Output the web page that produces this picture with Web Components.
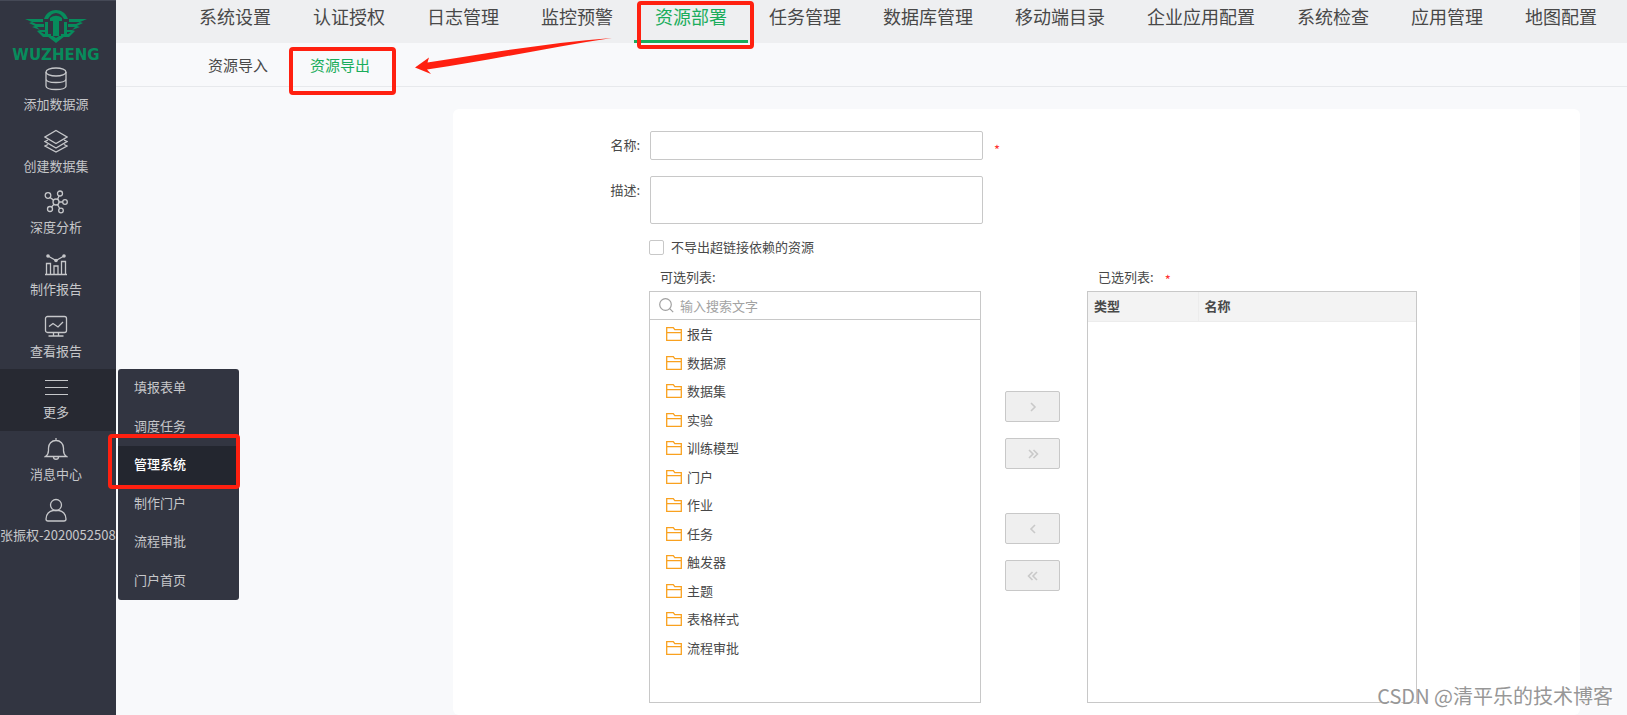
<!DOCTYPE html>
<html lang="zh-CN">
<head>
<meta charset="utf-8">
<title>资源导出</title>
<style>
  html { --red: #ff2010; --green: #1aad5c; --line: #c8c8c8; --dark: #323541; }
  body { margin: 0; background: #f8f9fb; color: #484848;
    font: 13px/20px "Noto Sans CJK SC", sans-serif; }
</style>
</head>
<body>
<app-shell>
  <side-nav slot="side">
    <side-item icon="db">添加数据源</side-item>
    <side-item icon="layers">创建数据集</side-item>
    <side-item icon="graph">深度分析</side-item>
    <side-item icon="bars">制作报告</side-item>
    <side-item icon="screen">查看报告</side-item>
    <side-item icon="more" active>更多
      <fly-menu slot="menu"></fly-menu>
    </side-item>
    <side-item icon="bell">消息中心</side-item>
    <side-item icon="user">张振权-2020052508</side-item>
  </side-nav>
  <tab-bar kind="main" current="资源部署"
    items="系统设置,认证授权,日志管理,监控预警,资源部署,任务管理,数据库管理,移动端目录,企业应用配置,系统检查,应用管理,地图配置"></tab-bar>
  <tab-bar kind="sub" current="资源导出" items="资源导入,资源导出"></tab-bar>
  <export-form></export-form>
</app-shell>

<script>
const define = (name, html) => customElements.define(name, class extends HTMLElement {
  connectedCallback() {
    if (this.shadowRoot) return;
    const root = this.attachShadow({ mode: 'open' });
    const t = document.createElement('template');
    t.innerHTML = '<style>*{box-sizing:border-box}</style>' + (typeof html === 'function' ? html(this) : html);
    root.append(t.content.cloneNode(true));
  }
});

const icons = {
  db: '<ellipse cx="12" cy="5" rx="10" ry="4"/><path d="M2 5v14c0 2.200 4.500 3.500 10 3.500s10-1.300 10-3.500V5M2 12c0 2.200 4.500 3.500 10 3.500s10-1.300 10-3.500"/>',
  layers: '<path d="M12 1.500 23 8l-11 6.500L1 8zM4 11l-3 1.500 11 6.500 11-6.500-3-1.500M4 15.500 1 17l11 6 11-6-3-1.500"/>',
  graph: '<circle cx="12" cy="12" r="3"/><circle cx="4" cy="5.500" r="2.800"/><circle cx="16" cy="3.500" r="2.500"/><circle cx="21" cy="12" r="2.300"/><circle cx="6" cy="19" r="2.500"/><circle cx="17" cy="20.500" r="2.300"/><path d="m6 7.500 3.700 2.600M15 6l-1.500 3.500M15 12h3.700M7.500 17l2.500-2.700M15.700 18.500 13.500 14.700"/>',
  bars: '<path d="M1 22.500h22M2.500 22V11.500h4V22M10 22v-8h4v8M17.500 22V9.500h4V22M4 4l8 4.500L20 4"/><g fill="currentColor" stroke="none"><circle cx="4" cy="4" r="1.800"/><circle cx="12" cy="8.500" r="1.800"/><circle cx="20" cy="4" r="1.800"/></g>',
  screen: '<rect x="1.500" y="2.500" width="21" height="16" rx="2"/><path d="m5 12.500 4-3 5 3.500 5-5M9.500 18.500v3M14.500 18.500v3M4.500 22h15"/>',
  more: '<path stroke-width="1" d="M1 5.500h23M1 12.500h23M1 19.500h23"/>',
  bell: '<path d="M1.500 19.500h21c-2-1.500-3-3-3-6V11c0-4-3-7.500-7.500-7.500S4.500 7 4.500 11v2.500c0 3-1 4.500-3 6zM12 3.500V1M9.500 20c0 3 5 3 5 0"/>',
  user: '<circle cx="12" cy="7" r="5.500"/><path d="M2 21c0-5 3.500-8 7-8.500h6c3.500.500 7 3.500 7 8.500 0 1.500-.800 2-2 2H4c-1.200 0-2-.500-2-2z"/>'
};

define('app-shell', `
  <style>
    :host { display: grid; grid-template-columns: 116px minmax(0, 1fr); min-height: 100vh; position: relative; overflow: hidden; }
    main { display: flex; flex-direction: column; }
    .arrow { position: absolute; left: 412px; top: 34px; fill: var(--red); pointer-events: none; }
    .mark { position: absolute; right: 14px; bottom: 4px; font-size: 20px; line-height: 30px; color: #979797;
      text-shadow: 1px 1px 0 #fff; }
  </style>
  <slot name="side"></slot>
  <main><slot></slot></main>
  <svg class="arrow" width="202" height="44" viewBox="0 0 202 44"><path d="M3 33.500 17 23.500 15.500 28.500C80 18.500 140 8.500 200 4 140 13 80 26 15 35.500L19 40z"/></svg>
  <div class="mark">CSDN @清平乐的技术博客</div>`);

define('side-nav', `
  <style>
    :host { display: block; background: var(--dark); border-top: 1px solid #454956; color: #c6c7ca; position: relative; z-index: 2; }
    .brand { display: flex; flex-direction: column; align-items: center; gap: 4px; height: 60px; padding: 8px 4px 0 0; color: #078c5c; }
    .brand span { font: bold 15px/16px "DejaVu Sans", sans-serif; }
    .brand svg { flex: none; }
    nav { display: flex; flex-direction: column; height: 493px; }
  </style>
  <div class="brand">
    <svg width="62" height="34" viewBox="0 0 62 34" fill="currentColor">
      <path d="M0 10h18v3H7l4 2h8v3H12l3 3h5v2h-4l3 2h7v3H18L12 22l3-1-8-3 3-1-6-3 3-1z"/>
      <path d="M62 10H44v3h11l-4 2h-8v3h7l-3 3h-5v2h4l-3 2h-7v3h8l6-6-3-1 8-3-3-1 6-3-3-1z"/>
      <path d="M19 10C21 4 26 1 31 1s10 3 12 9h-4c-2-4-5-6-8-6s-6 2-8 6z"/>
      <path d="M25 9c4-3 8-3 12 0v3h-3v15h-6V12h-3z"/>
      <path d="M20 13h3v12h-3zM39 13h3v12h-3zM22 27h6l3 2 3-2h6l-9 7z"/>
    </svg>
    <span>WUZHENG</span>
  </div>
  <nav><slot></slot></nav>`);

define('side-item', el => `
  <style>
    :host { display: block; flex: 1; position: relative; }
    :host([active]) { background: #272932; }
    a { display: flex; flex-direction: column; align-items: safe center; gap: 3px; height: 100%; padding: 6px 4px 0 0; white-space: nowrap;
      color: inherit; text-decoration: none; }
    svg { flex: none; fill: none; stroke: currentColor; stroke-width: 1.300; }
  </style>
  <a href="#"><svg width="24" height="24" viewBox="0 0 24 24">${icons[el.getAttribute('icon')]}</svg><span><slot></slot></span></a>
  <slot name="menu"></slot>`);

define('mark-box', `
  <style>:host { display: block; position: absolute; border: 4px solid var(--red); border-radius: 4px; pointer-events: none; box-sizing: border-box; }</style>`);

define('fly-menu', `
  <style>
    :host { display: flex; flex-direction: column; position: absolute; left: 118px; top: 0; width: 121px; height: 231px;
      background: var(--dark); border-radius: 3px; }
    a { flex: 1; display: flex; align-items: center; padding: 0 0 2px 16px; color: inherit; text-decoration: none; position: relative; }
    a.on { background: #23262f; color: #fff; font-weight: 500; }
    mark-box { inset: -12px -1px -4px -10px; }
  </style>
  <a href="#">填报表单</a><a href="#">调度任务</a>
  <a href="#" class="on">管理系统<mark-box></mark-box></a>
  <a href="#">制作门户</a><a href="#">流程审批</a><a href="#">门户首页</a>`);

define('tab-bar', el => `
  <style>
    :host { display: flex; box-sizing: border-box; padding-left: 62px; white-space: nowrap; }
    a { position: relative; padding: 0 21px; color: inherit; text-decoration: none; }
    a.on { color: var(--green); }
    :host([kind=main]) { height: 43px; background: #eeeff1; font-size: 18px; line-height: 32px; }
    :host([kind=main]) a.on { border-bottom: 3px solid var(--green); }
    :host([kind=main]) mark-box { inset: 1px -6px -9px 3px; }
    :host([kind=sub]) { height: 44px; padding-left: 71px; border-bottom: 1px solid #e7e9ec; font-size: 15px; line-height: 44px; }
    :host([kind=sub]) mark-box { inset: 4px -5px -9px 0; }
  </style>
  ${el.getAttribute('items').split(',').map(t => t === el.getAttribute('current')
    ? `<a href="#" class="on">${t}<mark-box></mark-box></a>` : `<a href="#">${t}</a>`).join('')}`);

define('folder-row', `
  <style>
    :host { display: flex; flex: 1; align-items: center; gap: 5px; padding-left: 16px; }
    svg { fill: none; stroke: #f9a11f; stroke-width: 1.300; }
  </style>
  <svg width="16" height="14" viewBox="0 0 16 14"><path d="M.700 13.300V.700h6.600l1.500 2h6.500v10.600zM.700 5.700h14.600"/></svg>
  <span><slot></slot></span>`);

const folders = ['报告','数据源','数据集','实验','训练模型','门户','作业','任务','触发器','主题','表格样式','流程审批'];
const chevron = (label, d) => `<button type="button" disabled aria-label="${label}"><svg width="12" height="10" viewBox="0 0 12 10"><path d="${d}"/></svg></button>`;

define('export-form', `
  <style>
    :host { display: block; flex: 1; margin: 22px 47px 0 337px; padding: 22px 0 11px; background: #fff; border-radius: 6px; }
    .row { display: flex; gap: 10px; margin-bottom: 16px; }
    .row > label { width: 187px; flex: none; text-align: right; line-height: 28px; }
    input, textarea { font: inherit; color: inherit; margin: 0; outline: 0; }
    .row input, textarea { width: 333px; border: 1px solid var(--line); border-radius: 2px; padding: 4px 6px; background: #fff; }
    .row input { height: 29px; }
    textarea { height: 48px; resize: none; display: block; }
    .row i, .right i { color: #f33; font-style: normal; }
    .row i { padding-top: 9px; line-height: 20px; margin-left: 1px; }
    .check { display: flex; align-items: center; gap: 7px; margin: -3px 0 10px 196px; }
    .check input { appearance: none; width: 15px; height: 15px; border: 1px solid var(--line); border-radius: 2px; }
    .lists { display: flex; margin-left: 196px; }
    .left { width: 332px; }
    .right { width: 330px; }
    .cap { height: 20px; margin-bottom: 4px; padding-left: 11px; display: flex; gap: 11px; }
    .cap i { padding-top: 3px; }
    .box { border: 1px solid var(--line); height: 412px; }
    .search { display: flex; align-items: center; gap: 6px; height: 28px; padding-left: 9px; border-bottom: 1px solid var(--line); }
    .search svg { fill: none; stroke: #a0a0a0; stroke-width: 1.200; }
    .search input { border: 0; padding: 0; flex: 1; min-width: 0; background: none; }
    .search input::placeholder { color: #a3a3a3; opacity: 1; }
    .tree { display: flex; flex-direction: column; height: 342px; }
    .moves { display: flex; flex-direction: column; gap: 16px; width: 55px; margin: 124px 27px 0 24px; }
    button { height: 31px; padding: 0; display: flex; align-items: center; justify-content: center; border: 1px solid var(--line); border-radius: 2px; background: #efefef; }
    button:nth-child(3) { margin-top: 28px; }
    button svg { fill: none; stroke: #c9c9c9; stroke-width: 1.600; }
    table { width: 100%; border-collapse: collapse; table-layout: fixed; }
    th { height: 29px; padding: 0 0 0 6px; text-align: left; font-weight: 700; background: #f3f3f3; border-bottom: 1px solid #ececec; }
    th:first-child { width: 110px; border-right: 1px solid #ececec; }
  </style>
  <div class="row"><label for="name">名称:</label><input id="name" type="text"><i>*</i></div>
  <div class="row"><label for="desc">描述:</label><textarea id="desc"></textarea></div>
  <div class="check"><input type="checkbox" id="skip"><label for="skip">不导出超链接依赖的资源</label></div>
  <div class="lists">
    <section class="left">
      <div class="cap"><label for="find">可选列表:</label></div>
      <div class="box">
        <div class="search"><svg width="15" height="15" viewBox="0 0 15 15"><circle cx="6.500" cy="6.500" r="5.800"/><path d="m10.700 10.700 3.500 3.500"/></svg>
          <input id="find" type="text" placeholder="输入搜索文字"></div>
        <div class="tree">${folders.map(f => `<folder-row>${f}</folder-row>`).join('')}</div>
      </div>
    </section>
    <div class="moves">
      ${chevron('添加', 'm4 1 4 4-4 4')}${chevron('全部添加', 'm2 1 4 4-4 4M6.500 1l4 4-4 4')}
      ${chevron('移除', 'M8 1 4 5l4 4')}${chevron('全部移除', 'm5.500 1-4 4 4 4M10 1 6 5l4 4')}
    </div>
    <section class="right">
      <div class="cap"><span>已选列表:</span><i>*</i></div>
      <div class="box"><table><thead><tr><th>类型</th><th>名称</th></tr></thead></table></div>
    </section>
  </div>`);
</script>
</body>
</html>
